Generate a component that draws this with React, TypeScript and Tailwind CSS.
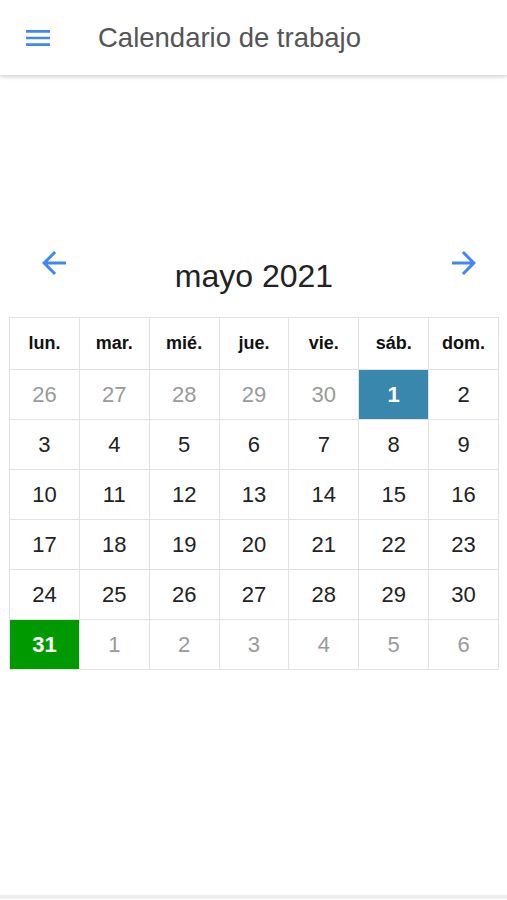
const WEEKDAYS = ['lun.', 'mar.', 'mié.', 'jue.', 'vie.', 'sáb.', 'dom.'];

type Day = { n: number; muted?: boolean; tone?: 'blue' | 'green' };

const DAYS: Day[] = [
  { n: 26, muted: true },
  { n: 27, muted: true },
  { n: 28, muted: true },
  { n: 29, muted: true },
  { n: 30, muted: true },
  { n: 1, tone: 'blue' },
  ...Array.from({ length: 29 }, (_, i) => ({ n: i + 2 })),
  { n: 31, tone: 'green' },
  ...Array.from({ length: 6 }, (_, i) => ({ n: i + 1, muted: true })),
];

function MenuIcon() {
  return (
    <svg width="32" height="32" viewBox="0 0 24 24" fill="#4285f4">
      <path d="M3 18h18v-2H3v2zm0-5h18v-2H3v2zm0-7v2h18V6H3z" />
    </svg>
  );
}

function Arrow({ dir }: { dir: 'left' | 'right' }) {
  const d =
    dir === 'left'
      ? 'M20 11H7.83l5.59-5.59L12 4l-8 8 8 8 1.41-1.41L7.83 13H20v-2z'
      : 'M12 4l-1.41 1.41L16.17 11H4v2h12.17l-5.58 5.59L12 20l8-8z';
  return (
    <svg width="36" height="36" viewBox="0 0 24 24" fill="#4285f4">
      <path d={d} />
    </svg>
  );
}

function cellClass(d: Day) {
  if (d.tone === 'blue') return 'bg-[#3a87ad] text-white font-bold';
  if (d.tone === 'green') return 'bg-[#009a00] text-white font-bold';
  if (d.muted) return 'text-[#9a9a9a]';
  return 'text-[#222]';
}

export default function App() {
  return (
    <div
      className="h-[900px] flex flex-col bg-white overflow-hidden"
      style={{ fontFamily: '"Liberation Sans", Arial, sans-serif' }}
    >
      {/* TOP BAR */}
      <header className="h-[75px] shrink-0 flex items-center bg-white shadow-[0_2px_4px_rgba(0,0,0,0.18)] z-10">
        <button className="ml-[22px] w-8 h-8 flex items-center justify-center">
          <MenuIcon />
        </button>
        <h1 className="ml-[44px] text-[27.5px] text-[#555] leading-none mt-[1px]">
          Calendario de trabajo
        </h1>
      </header>

      {/* CALENDAR */}
      <main className="pt-[170px] ml-[9px] w-[490px]">
        <div className="grid grid-cols-[1fr_auto_1fr] items-start">
          <button className="justify-self-start ml-[27px]">
            <Arrow dir="left" />
          </button>
          <h2 className="mt-[12px] text-[32px] leading-[38px] text-[#222]">
            mayo 2021
          </h2>
          <button className="justify-self-end mr-[17px]">
            <Arrow dir="right" />
          </button>
        </div>

        <div className="mt-[22px] grid grid-cols-7 border-l border-t border-[#e2e2e2]">
          {WEEKDAYS.map((w) => (
            <div
              key={w}
              className="h-[52px] flex items-center justify-center border-r border-b border-[#e2e2e2] text-[18px] font-bold text-[#111]"
            >
              {w}
            </div>
          ))}
          {DAYS.map((d, i) => (
            <div
              key={i}
              className={`h-[50px] flex items-center justify-center border-r border-b border-[#e2e2e2] text-[22px] ${cellClass(d)}`}
            >
              {d.n}
            </div>
          ))}
        </div>
      </main>

      <div className="flex-1" />
      <div className="h-[4px] mb-[1px] bg-[#eeeeee]" />
    </div>
  );
}
